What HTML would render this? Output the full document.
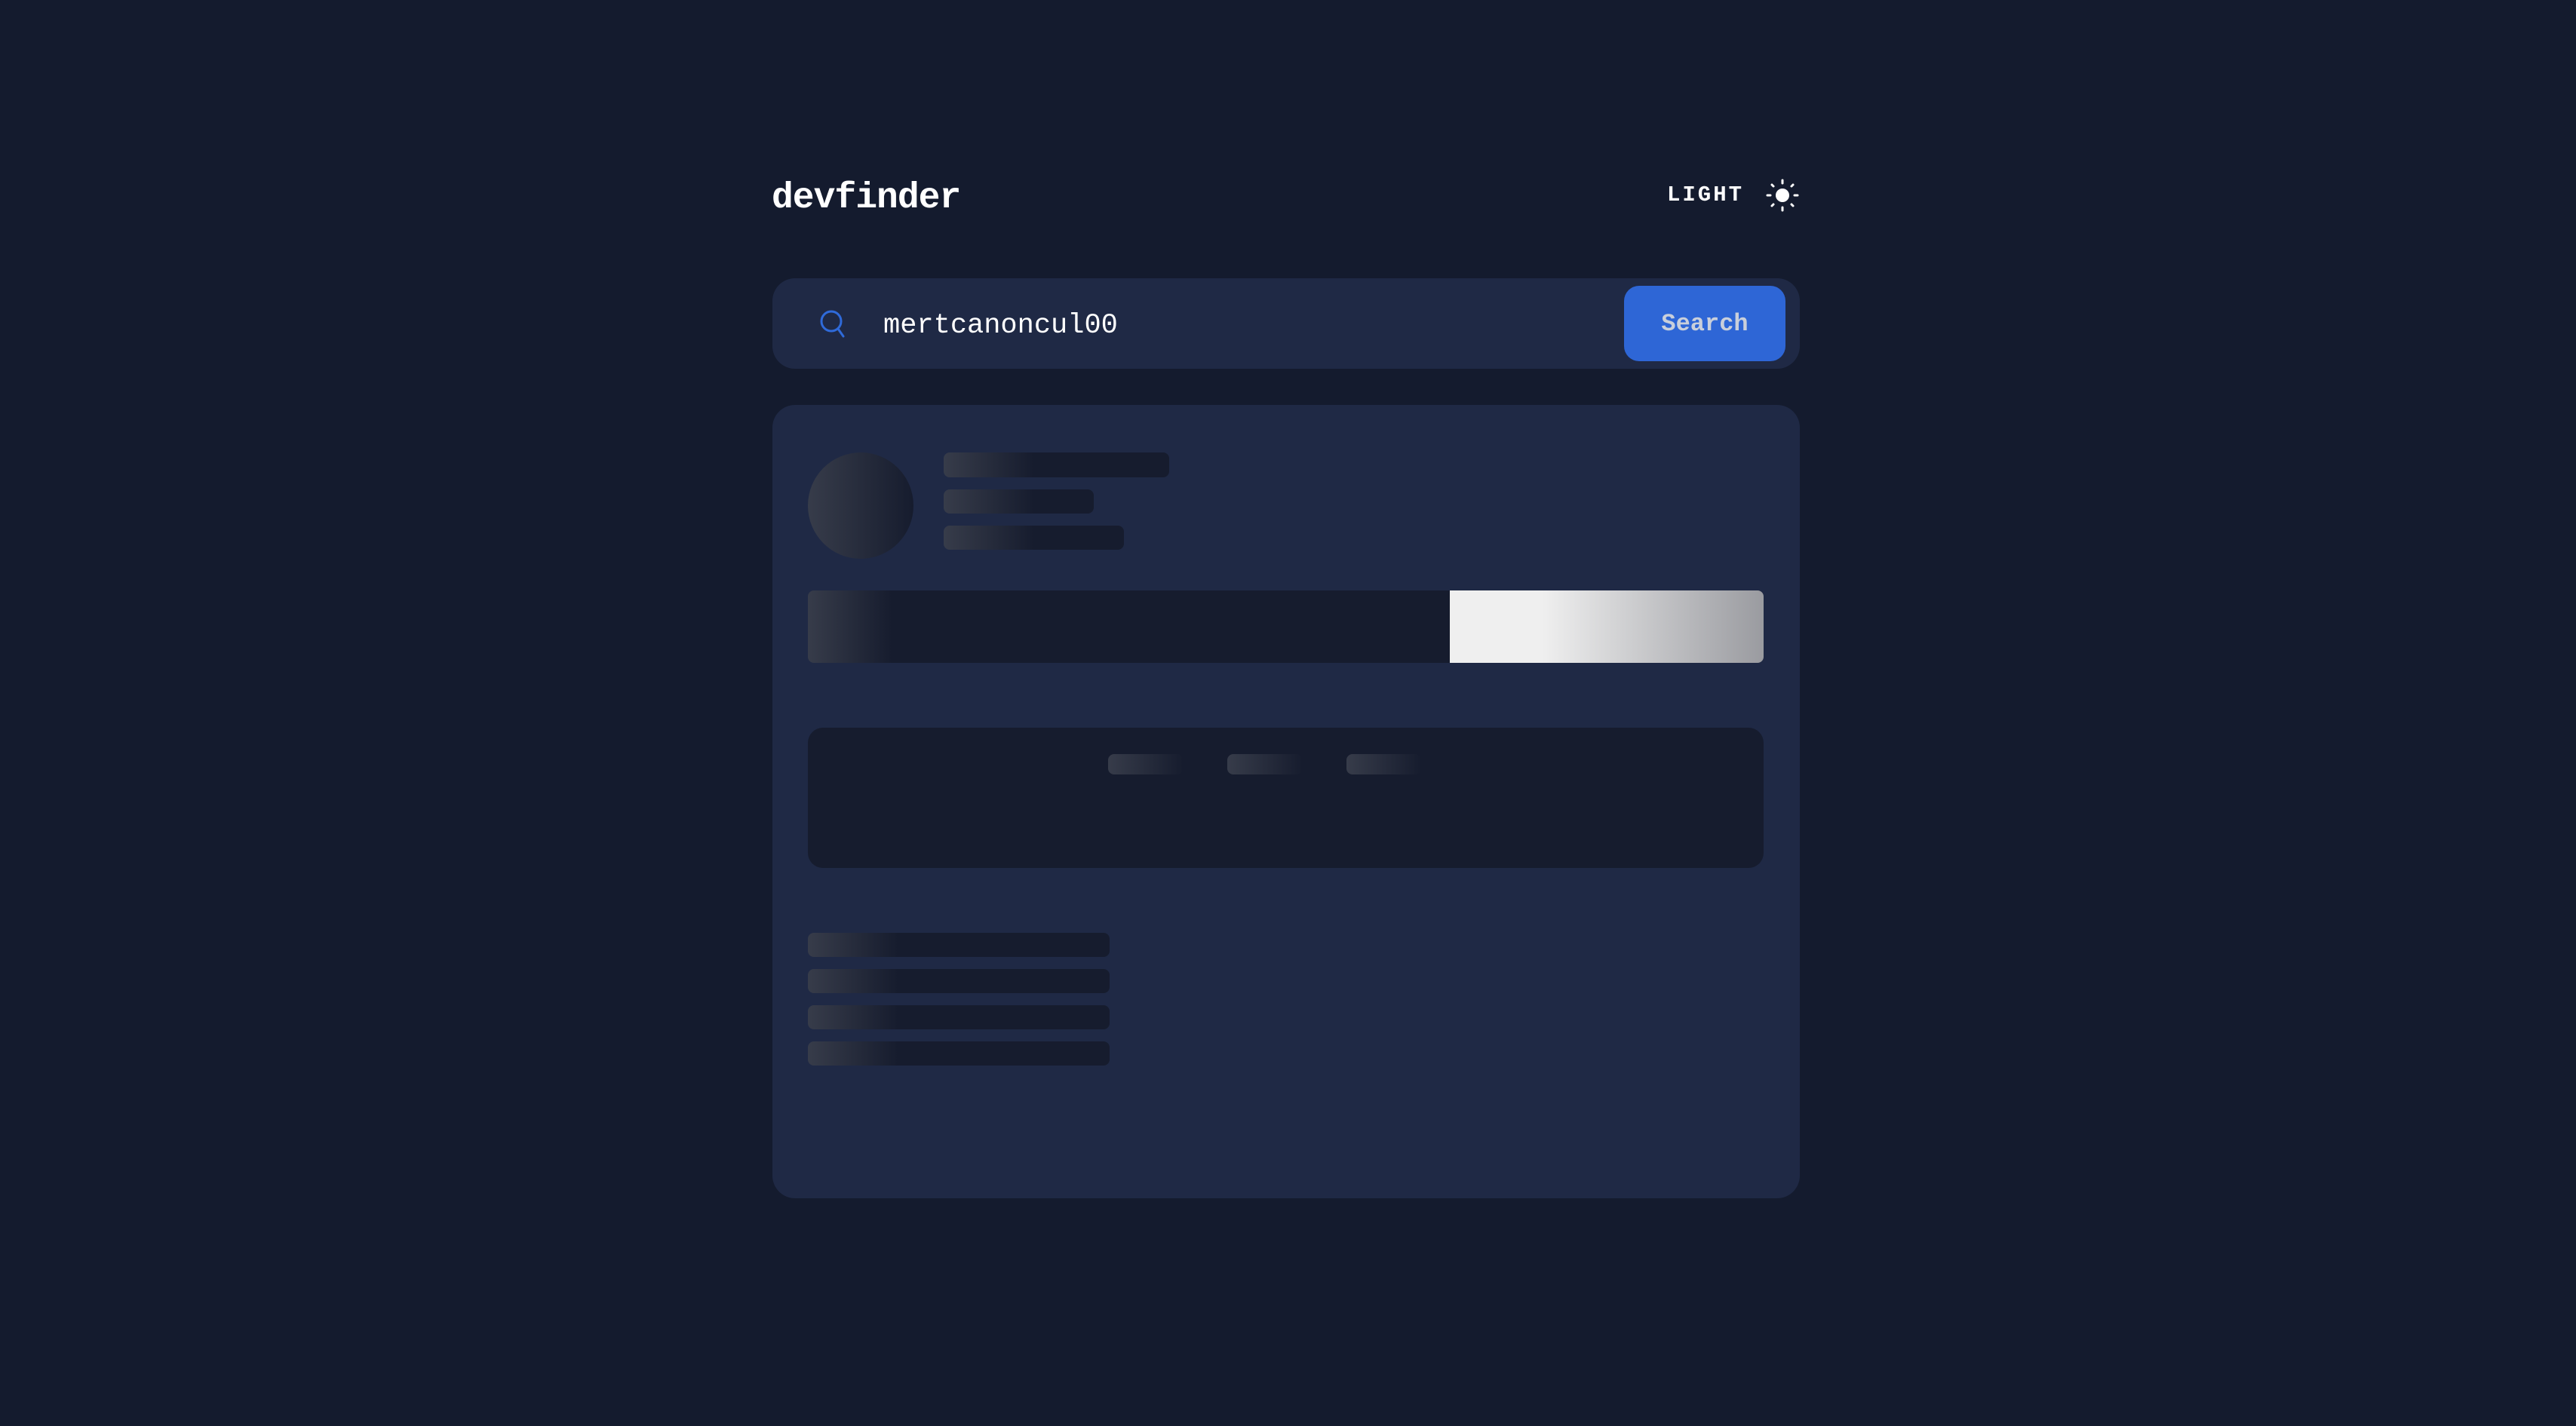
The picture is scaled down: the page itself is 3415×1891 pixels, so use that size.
<!DOCTYPE html>
<html><head><meta charset="utf-8"><style>
html,body{margin:0;padding:0}
body{width:3415px;height:1891px;background:#141b2e;position:relative;overflow:hidden;font-family:"Liberation Mono",monospace}
.a{position:absolute}
.sk{position:absolute;background:linear-gradient(90deg,#373c4a 0,#161c2e 120px);border-radius:8px}
</style></head><body>
<div class="a" style="left:1023px;top:233px;font-size:48px;font-weight:bold;color:#fff;line-height:60px;letter-spacing:-1px">devfinder</div>
<div class="a" style="left:2210px;top:243px;font-size:29px;font-weight:bold;color:#fff;letter-spacing:3px;line-height:32px">LIGHT</div>
<svg class="a" style="left:2341px;top:237px" width="44" height="44" viewBox="0 0 44 44">
<circle cx="22" cy="22" r="9" fill="#fff"/>
<g stroke="#fff" stroke-width="3" stroke-linecap="round">
<line x1="22" y1="2" x2="22" y2="6"/><line x1="22" y1="38" x2="22" y2="42"/>
<line x1="2" y1="22" x2="6" y2="22"/><line x1="38" y1="22" x2="42" y2="22"/>
<line x1="8" y1="8" x2="10" y2="10"/><line x1="34" y1="34" x2="36" y2="36"/>
<line x1="8" y1="36" x2="10" y2="34"/><line x1="34" y1="10" x2="36" y2="8"/>
</g></svg>
<div class="a" style="left:1024px;top:369px;width:1362px;height:120px;background:#1f2945;border-radius:30px"></div>
<svg class="a" style="left:1085px;top:409px" width="40" height="40" viewBox="0 0 40 40"><circle cx="17" cy="17" r="13" fill="none" stroke="#2f6ad9" stroke-width="3"/><line x1="26" y1="27" x2="33" y2="37" stroke="#2f6ad9" stroke-width="3" stroke-linecap="round"/></svg>
<div class="a" style="left:1171px;top:408px;font-size:37px;color:#fff;line-height:48px">mertcanoncul00</div>
<div class="a" style="left:2153px;top:379px;width:214px;height:100px;background:#2e66d6;border-radius:20px;color:#c9cfdb;font-size:32px;font-weight:bold;line-height:102px;text-align:center">Search</div>
<div class="a" style="left:1024px;top:537px;width:1362px;height:1052px;background:#1f2945;border-radius:30px"></div>
<div class="a" style="left:1071px;top:600px;width:140px;height:141px;border-radius:50%;background:linear-gradient(90deg,#373c4a,#161c2e)"></div>
<div class="sk" style="left:1251px;top:600px;width:299px;height:33px"></div>
<div class="sk" style="left:1251px;top:649px;width:199px;height:32px"></div>
<div class="sk" style="left:1251px;top:697px;width:239px;height:32px"></div>
<div class="sk" style="left:1071px;top:783px;width:1267px;height:96px;background:linear-gradient(90deg,#373c4a 0,#161c2e 112px)"></div>
<div class="a" style="left:1922px;top:783px;width:416px;height:96px;border-radius:0 8px 8px 0;background:linear-gradient(90deg,#efefef 0,#efefef 123px,#9a9ba0 100%)"></div>
<div class="a" style="left:1071px;top:965px;width:1267px;height:186px;background:#161c2e;border-radius:20px"></div>
<div class="sk" style="left:1469px;top:1000px;width:100px;height:27px;background:linear-gradient(90deg,#373c4a,#161c2e)"></div>
<div class="sk" style="left:1627px;top:1000px;width:100px;height:27px;background:linear-gradient(90deg,#373c4a,#161c2e)"></div>
<div class="sk" style="left:1785px;top:1000px;width:99px;height:27px;background:linear-gradient(90deg,#373c4a,#161c2e)"></div>
<div class="sk" style="left:1071px;top:1237px;width:400px;height:32px"></div>
<div class="sk" style="left:1071px;top:1285px;width:400px;height:32px"></div>
<div class="sk" style="left:1071px;top:1333px;width:400px;height:32px"></div>
<div class="sk" style="left:1071px;top:1381px;width:400px;height:32px"></div>
</body></html>
